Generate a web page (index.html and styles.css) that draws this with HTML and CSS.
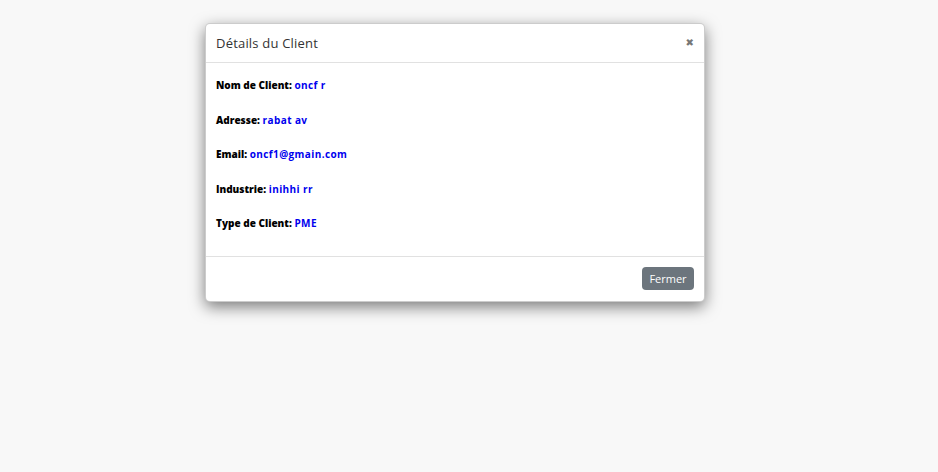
FILE: index.html
```html
<!DOCTYPE html>
<html lang="fr">
<head>
<meta charset="utf-8">
<title>Détails du Client</title>
<link rel="stylesheet" href="styles.css">
</head>
<body>
<div class="modal">
  <div class="modal-header">
    <h4 class="modal-title">Détails du Client</h4>
    <button class="close" type="button">&#x2716;</button>
  </div>
  <div class="modal-body">
    <p><strong>Nom de Client:</strong> <span class="val">oncf r</span></p>
    <p><strong>Adresse:</strong> <span class="val">rabat av</span></p>
    <p><strong>Email:</strong> <span class="val">oncf1@gmain.com</span></p>
    <p><strong>Industrie:</strong> <span class="val">inihhi rr</span></p>
    <p><strong>Type de Client:</strong> <span class="val">PME</span></p>
  </div>
  <div class="modal-footer">
    <button class="btn" type="button">Fermer</button>
  </div>
</div>
</body>
</html>
```

FILE: styles.css
```css
html, body {
  margin: 0;
  padding: 0;
  background: #f8f8f8;
  font-family: "Open Sans", "DejaVu Sans", sans-serif;
}
body {
  padding: 23px 0 0 205px;
  height: 472px;
  box-sizing: border-box;
}
.modal {
  width: 500px;
  box-sizing: border-box;
  background: #fff;
  border: 1px solid rgba(0,0,0,0.2);
  border-radius: 5px;
  box-shadow: 0 5px 15px rgba(0,0,0,0.5);
  display: flex;
  flex-direction: column;
}
.modal-header {
  height: 38px;
  padding: 0 10px 0 10px;
  display: flex;
  align-items: center;
  justify-content: space-between;
  border-bottom: 1px solid #e1e1e1;
}
.modal-title {
  margin: 0;
  font-size: 13px;
  font-weight: 400;
  color: #333;
  letter-spacing: 0.2px;
}
.close {
  border: 0;
  background: none;
  padding: 0;
  font-size: 10px;
  color: #777;
  line-height: 1;
  cursor: pointer;
  font-family: "DejaVu Sans", sans-serif;
  font-weight: bold;
}
.modal-body {
  padding: 15px 10px 5px;
}
.modal-body p {
  margin: 0 0 19.5px;
  font-size: 10px;
  line-height: 15px;
  font-weight: 700;
  color: #000;
}
.val {
  color: #0000ee;
  letter-spacing: 0.4px;
}
.modal-footer {
  border-top: 1px solid #e1e1e1;
  padding: 10px 10px 11px;
  display: flex;
  justify-content: flex-end;
}
.btn {
  width: 52px;
  height: 23px;
  padding: 0;
  border: 0;
  border-radius: 4px;
  background: #6c757d;
  color: #fff;
  font-family: "Open Sans", "DejaVu Sans", sans-serif;
  font-size: 11px;
}
```
